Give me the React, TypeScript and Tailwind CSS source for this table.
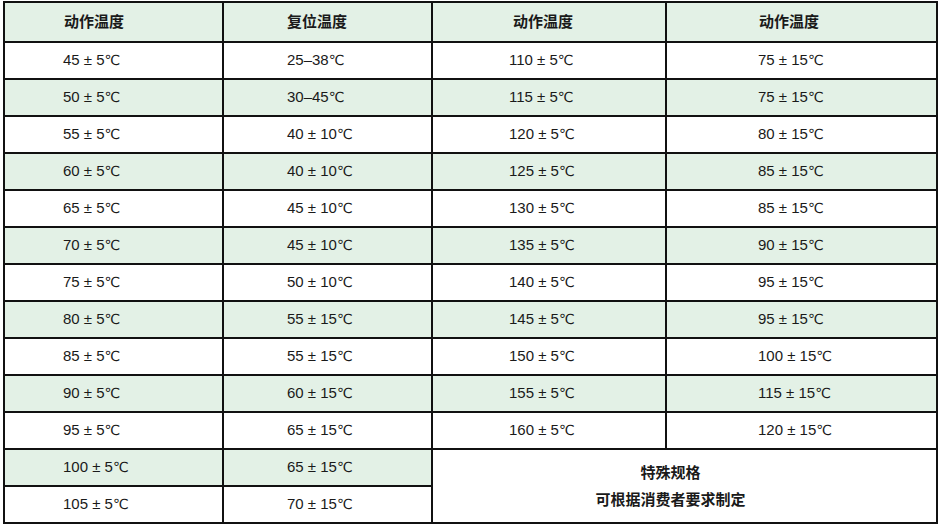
const left: [string, string][] = [
  ["45 ± 5", "25–38"],
  ["50 ± 5", "30–45"],
  ["55 ± 5", "40 ± 10"],
  ["60 ± 5", "40 ± 10"],
  ["65 ± 5", "45 ± 10"],
  ["70 ± 5", "45 ± 10"],
  ["75 ± 5", "50 ± 10"],
  ["80 ± 5", "55 ± 15"],
  ["85 ± 5", "55 ± 15"],
  ["90 ± 5", "60 ± 15"],
  ["95 ± 5", "65 ± 15"],
  ["100 ± 5", "65 ± 15"],
  ["105 ± 5", "70 ± 15"],
];

const right: [string, string][] = [
  ["110 ± 5", "75 ± 15"],
  ["115 ± 5", "75 ± 15"],
  ["120 ± 5", "80 ± 15"],
  ["125 ± 5", "85 ± 15"],
  ["130 ± 5", "85 ± 15"],
  ["135 ± 5", "90 ± 15"],
  ["140 ± 5", "95 ± 15"],
  ["145 ± 5", "95 ± 15"],
  ["150 ± 5", "100 ± 15"],
  ["155 ± 5", "115 ± 15"],
  ["160 ± 5", "120 ± 15"],
];

// separate borders: table draws left/top, each cell draws right/bottom
const cell = "border-r-2 border-b-2 border-[#111] p-0 align-middle";

function Temp({ v }: { v: string }) {
  return (
    <span className="whitespace-nowrap">
      {v}
      <span className="text-[14px]" style={{ fontFamily: '"DejaVu Sans", sans-serif' }}>
        ℃
      </span>
    </span>
  );
}

export default function App() {
  return (
    <div
      className="bg-white pt-[1px] pl-[3px] text-[15px] text-[#1a1a1a]"
      style={{ fontFamily: '"Liberation Sans", "Noto Sans CJK SC", sans-serif' }}
    >
      <table className="table-fixed border-separate border-spacing-0 border-l-2 border-t-2 border-[#111] w-[935px]">
        <colgroup>
          <col className="w-[219px]" />
          <col className="w-[209px]" />
          <col className="w-[234px]" />
          <col className="w-[271px]" />
        </colgroup>
        <thead>
          <tr className="h-[40px] bg-[#e3f1e6] text-left font-semibold">
            <th className={`${cell} pl-[59px]`}>动作温度</th>
            <th className={`${cell} pl-[63px]`}>复位温度</th>
            <th className={`${cell} pl-[80px]`}>动作温度</th>
            <th className={`${cell} pl-[92px]`}>动作温度</th>
          </tr>
        </thead>
        <tbody>
          {left.map((row, i) => {
            const bg = i % 2 === 1 ? "bg-[#e3f1e6]" : "bg-white";
            const r = right[i];
            return (
              <tr key={i} className="h-[37px]">
                <td className={`${cell} pl-[58px] ${bg}`}>
                  <Temp v={row[0]} />
                </td>
                <td className={`${cell} pl-[63px] ${bg}`}>
                  <Temp v={row[1]} />
                </td>
                {r && (
                  <>
                    <td className={`${cell} pl-[76px] ${bg}`}>
                      <Temp v={r[0]} />
                    </td>
                    <td className={`${cell} pl-[91px] ${bg}`}>
                      <Temp v={r[1]} />
                    </td>
                  </>
                )}
                {i === 11 && (
                  <td colSpan={2} rowSpan={2} className={`${cell} bg-white pr-[28px] text-center font-semibold`}>
                    <div className="leading-[27px]">特殊规格</div>
                    <div className="leading-[27px]">可根据消费者要求制定</div>
                  </td>
                )}
              </tr>
            );
          })}
        </tbody>
      </table>
    </div>
  );
}
